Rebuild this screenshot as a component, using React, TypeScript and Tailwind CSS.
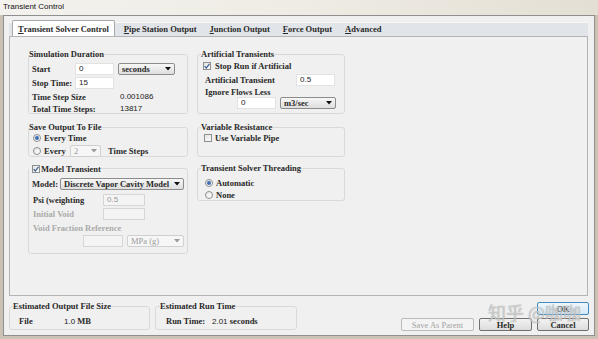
import React from "react";

const serif = "font-['Liberation_Serif',serif] font-bold text-[8.5px] leading-[10px] text-[#2a2a2a]";
const sans = "font-['Liberation_Sans',sans-serif] text-[8px] leading-[10px] text-[#222]";

function Input({ w, value, disabled }: { w: string; value?: string; disabled?: boolean }) {
  return (
    <div
      className={`${w} h-[12px] border ${disabled ? "border-[#d6d6d6] bg-[#f4f4f4] text-[#9a9a9a]" : "border-[#e2e2e2] bg-white text-[#222]"} font-['Liberation_Sans',sans-serif] text-[8px] leading-[10px] pl-[3px]`}
    >
      {value}
    </div>
  );
}

function Arrow({ disabled }: { disabled?: boolean }) {
  return (
    <svg width="6" height="4" viewBox="0 0 6 4">
      <path d="M0 0 L6 0 L3 3.5 Z" fill={disabled ? "#9a9a9a" : "#111"} />
    </svg>
  );
}

function Select({ w, value, disabled }: { w: string; value: string; disabled?: boolean }) {
  return (
    <div
      className={`${w} h-[12px] flex items-center justify-between px-[3px] rounded-[2px] border ${disabled ? "border-[#d0d0d0] bg-[#f6f6f6]" : "border-[#8c8c8c] bg-gradient-to-b from-[#f7f7f7] to-[#dedede]"}`}
    >
      <span className={`${serif} ${disabled ? "!text-[#9a9a9a] font-normal" : ""}`}>{value}</span>
      <Arrow disabled={disabled} />
    </div>
  );
}

function Checkbox({ checked }: { checked?: boolean }) {
  return (
    <div className="w-[8px] h-[8px] border border-[#8e8f8f] bg-gradient-to-br from-[#e4e4e4] to-[#fbfbfb] flex items-center justify-center shrink-0">
      {checked && (
        <svg width="6" height="6" viewBox="0 0 6 6">
          <path d="M0.6 3.2 L2.3 5 L5.4 0.8" stroke="#3b5f92" strokeWidth="1.2" fill="none" />
        </svg>
      )}
    </div>
  );
}

function Radio({ checked }: { checked?: boolean }) {
  return (
    <div className="w-[8px] h-[8px] rounded-full border border-[#8e8f8f] bg-gradient-to-br from-[#e6e6e6] to-white flex items-center justify-center shrink-0">
      {checked && <div className="w-[4px] h-[4px] rounded-full bg-[#3d6db3]" />}
    </div>
  );
}

function Group({
  label,
  className,
  inner,
  legend = "",
  children,
}: {
  label: React.ReactNode;
  className: string;
  inner?: string;
  legend?: string;
  children?: React.ReactNode;
}) {
  return (
    <fieldset className={`border border-[#d9d9d9] rounded-[3px] ${className}`}>
      <legend className={`${serif} leading-[8px] px-0 ${legend}`}>{label}</legend>
      <div className={inner}>{children}</div>
    </fieldset>
  );
}

function Tab({ first, rest, active }: { first: string; rest: string; active?: boolean }) {
  return (
    <div
      className={`${serif} flex items-center ${active ? "bg-white border border-b-0 border-[#a9a9a9] h-[16px] -mt-[2px] px-[5px] rounded-t-[2px] mr-[3px]" : "h-[14px] px-[6px] mr-[1px]"}`}
    >
      <span className="underline">{first}</span>
      {rest}
    </div>
  );
}

function Button({ label, disabled, primary, w }: { label: string; disabled?: boolean; primary?: boolean; w: string }) {
  return (
    <div
      className={`${w} h-[13px] rounded-[2px] flex items-center justify-center border ${serif} ${
        disabled
          ? "border-[#b8bcbf] bg-[#f3f3f3] !text-[#a3a3a3] font-normal"
          : primary
            ? "border-[#3f8cc3] bg-gradient-to-b from-[#eef7fc] to-[#d4e9f6]"
            : "border-[#707070] bg-gradient-to-b from-[#f3f3f3] to-[#dcdcdc]"
      }`}
    >
      {label}
    </div>
  );
}

export default function App() {
  return (
    <div className="relative w-[598px] h-[339px] overflow-hidden bg-[#cbc2b3]">
      <div className="h-[15px] bg-gradient-to-r from-[#f4f2ee] via-[#efece5] to-[#e4dfd4] pl-[3px] font-['Liberation_Sans',sans-serif] text-[8px] leading-[13px] text-[#111]">
        Transient Control
      </div>
      <div className="ml-[3px] w-[592px] h-[321px] bg-[#f0f0f0] border border-[#8f8f8f] pt-[6px]">
        <div className="ml-[5px] w-[579px]">
          <div className="h-[14px] bg-[#e1e4e8] border-t border-[#f7f7f7] flex items-end pl-[3px]">
            <Tab first="T" rest="ransient Solver Control" active />
            <Tab first="P" rest="ipe Station Output" />
            <Tab first="J" rest="unction Output" />
            <Tab first="F" rest="orce Output" />
            <Tab first="A" rest="dvanced" />
          </div>
          <div className="h-[260px] border border-[#b4b4b4] bg-[#f0f0f0] pt-[12px] pl-[18px] flex gap-[9px]">
            {/* left column */}
            <div className="w-[160px] flex flex-col">
              <Group label="Simulation Duration" className="h-[65px]" inner="pl-[3px]">
                <div className="mt-[4px] h-[12px] flex items-center">
                  <span className={`${serif} w-[43px]`}>Start</span>
                  <Input w="w-[39px]" value="0" />
                  <div className="w-[4px]" />
                  <Select w="w-[57px]" value="seconds" />
                </div>
                <div className="mt-[2px] h-[12px] flex items-center">
                  <span className={`${serif} w-[43px]`}>Stop Time:</span>
                  <Input w="w-[39px]" value="15" />
                </div>
                <div className="mt-[3px] h-[10px] flex items-center">
                  <span className={`${serif} w-[88px]`}>Time Step Size</span>
                  <span className={sans}>0.001086</span>
                </div>
                <div className="mt-[2px] h-[10px] flex items-center">
                  <span className={`${serif} w-[88px]`}>Total Time Steps:</span>
                  <span className={sans}>13817</span>
                </div>
              </Group>
              <Group label="Save Output To File" className="mt-[8px] h-[35px]" inner="pl-[4px]">
                <div className="mt-[1px] h-[10px] flex items-center gap-[3px]">
                  <Radio checked />
                  <span className={serif}>Every Time</span>
                </div>
                <div className="mt-[2px] h-[11px] flex items-center">
                  <Radio />
                  <span className={`${serif} ml-[3px] w-[26px]`}>Every</span>
                  <Select w="w-[31px]" value="2" disabled />
                  <span className={`${serif} ml-[7px]`}>Time Steps</span>
                </div>
              </Group>
              <Group
                label={
                  <span className="flex items-center gap-[1px] h-[9px] pl-[3px]">
                    <Checkbox checked />
                    <span>Model Transient</span>
                  </span>
                }
                className="mt-[7px] h-[90px]"
                inner="pl-[3px]"
              >
                <div className="mt-[4px] h-[13px] flex items-center">
                  <span className={`${serif} w-[28px]`}>Model:</span>
                  <Select w="w-[124px]" value="Discrete Vapor Cavity Model" />
                </div>
                <div className="mt-[4px] h-[12px] flex items-center">
                  <span className={`${serif} w-[71px] pl-[1px]`}>Psi (weighting</span>
                  <Input w="w-[42px]" value="0.5" disabled />
                </div>
                <div className="mt-[2px] h-[11px] flex items-center">
                  <span className={`${serif} w-[71px] pl-[1px] !text-[#ababab]`}>Initial Void</span>
                  <Input w="w-[42px]" disabled />
                </div>
                <div className="mt-[4px] h-[10px] flex items-center">
                  <span className={`${serif} pl-[1px] !text-[#ababab]`}>Void Fraction Reference</span>
                </div>
                <div className="mt-[2px] h-[11px] flex items-center pl-[51px]">
                  <Input w="w-[40px]" disabled />
                  <div className="w-[4px]" />
                  <Select w="w-[57px]" value="MPa (g)" disabled />
                </div>
              </Group>
            </div>
            {/* right column */}
            <div className="w-[148px] flex flex-col">
              <Group label="Artificial Transients" className="h-[65px]" legend="ml-[3px]" inner="pl-[5px]">
                <div className="mt-[2px] h-[10px] flex items-center gap-[4px]">
                  <Checkbox checked />
                  <span className={serif}>Stop Run if Artificial</span>
                </div>
                <div className="mt-[3px] h-[12px] flex items-center pl-[2px]">
                  <span className={`${serif} w-[91px]`}>Artificial Transient</span>
                  <Input w="w-[39px]" value="0.5" />
                </div>
                <div className="mt-[1px] h-[10px] flex items-center pl-[2px]">
                  <span className={serif}>Ignore Flows Less</span>
                </div>
                <div className="h-[12px] flex items-center pl-[34px]">
                  <Input w="w-[39px]" value="0" />
                  <div className="w-[4px]" />
                  <Select w="w-[56px]" value="m3/sec" />
                </div>
              </Group>
              <Group label="Variable Resistance" className="mt-[8px] h-[35px]" legend="ml-[3px]" inner="pl-[6px]">
                <div className="mt-[1px] h-[10px] flex items-center gap-[3px]">
                  <Checkbox />
                  <span className={serif}>Use Variable Pipe</span>
                </div>
              </Group>
              <Group label="Transient Solver Threading" className="mt-[6px] h-[38px]" legend="ml-[3px]" inner="pl-[7px]">
                <div className="mt-[5px] h-[10px] flex items-center gap-[3px]">
                  <Radio checked />
                  <span className={serif}>Automatic</span>
                </div>
                <div className="mt-[2px] h-[10px] flex items-center gap-[3px]">
                  <Radio />
                  <span className={serif}>None</span>
                </div>
              </Group>
            </div>
          </div>
        </div>
        {/* bottom area */}
        <div className="flex pl-[5px] pr-[5px]">
          <Group label="Estimated Output File Size" className="mt-[5px] w-[141px] h-[29px]" legend="ml-[3px]" inner="pl-[9px]">
            <div className="mt-[5px] h-[10px] flex items-center">
              <span className={`${serif} w-[45px]`}>File</span>
              <span className={sans}>1.0 <span className={serif}>MB</span></span>
            </div>
          </Group>
          <Group label="Estimated Run Time" className="mt-[5px] ml-[5px] w-[142px] h-[29px]" legend="ml-[4px]" inner="pl-[10px]">
            <div className="mt-[5px] h-[10px] flex items-center">
              <span className={`${serif} w-[46px]`}>Run Time:</span>
              <span className={sans}>2.01 <span className={serif}>seconds</span></span>
            </div>
          </Group>
          <div className="flex-1" />
          <div className="flex flex-col items-end pt-[6px] gap-[3px]">
            <Button label="OK" primary w="w-[52px]" />
            <div className="flex gap-[5px]">
              <Button label="Save As Parent" disabled w="w-[73px]" />
              <Button label="Help" w="w-[53px]" />
              <Button label="Cancel" w="w-[52px]" />
            </div>
          </div>
        </div>
      </div>
      <div className="absolute left-[488px] top-[300px] font-['Noto_Sans_CJK_SC',sans-serif] text-[18px] leading-[24px] text-white/50 [text-shadow:0_0_1px_#888] pointer-events-none">
        知乎 @咖咖
      </div>
    </div>
  );
}
